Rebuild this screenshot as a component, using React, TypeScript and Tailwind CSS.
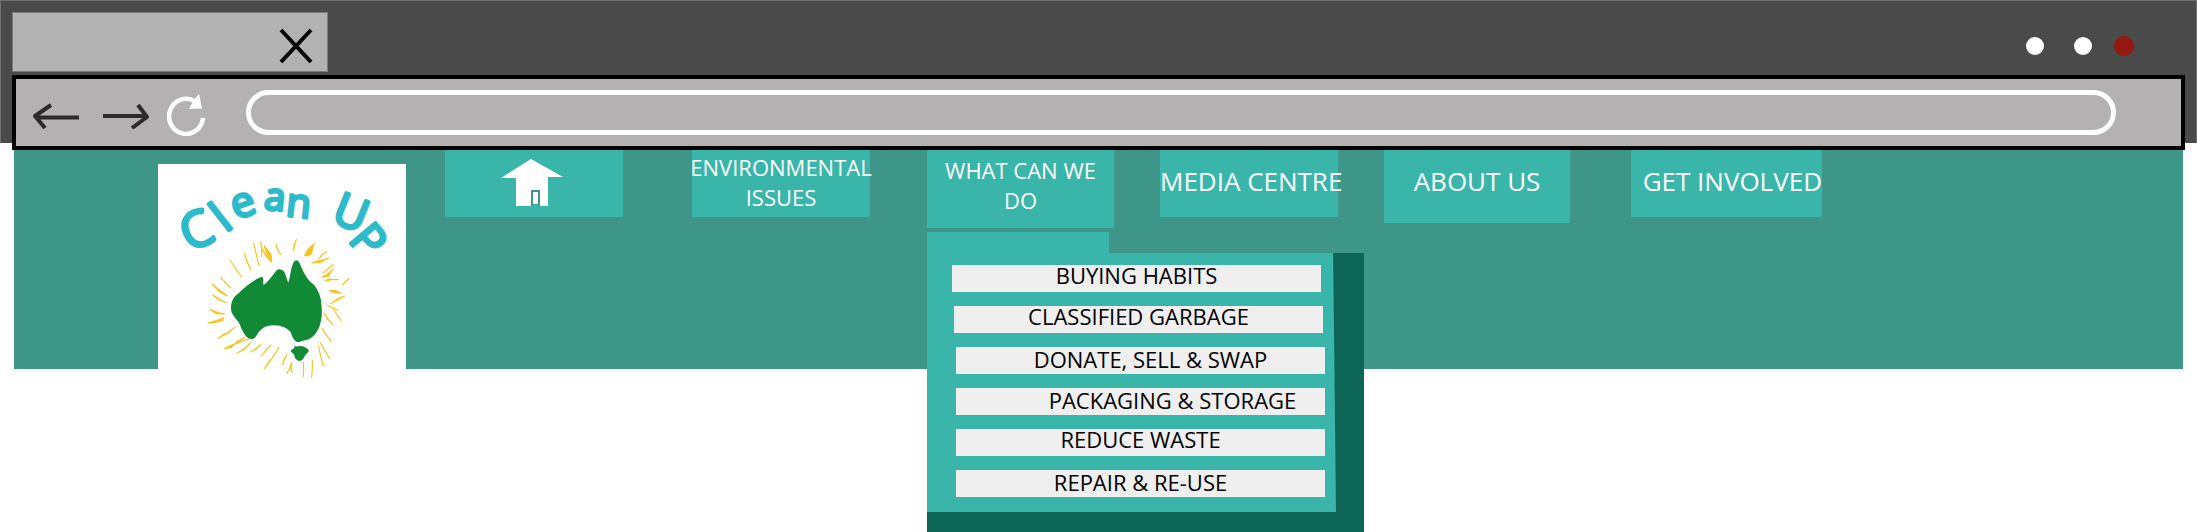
import React from "react";

const menuItems = [
  { label: "BUYING HABITS", place: "pb-2" },
  { label: "CLASSIFIED GARBAGE", place: "ml-0.5 pb-2" },
  { label: "DONATE, SELL & SWAP", place: "ml-1 pb-1 pl-5" },
  { label: "PACKAGING & STORAGE", place: "ml-1 pb-1 pl-16" },
  { label: "REDUCE WASTE", place: "ml-1 pb-2" },
  { label: "REPAIR & RE-USE", place: "ml-1 pb-1" },
];

const rays = [
  "M240 330l18 27 17 24", "M283 310l8 25 12 24", "M311 280l8 34 8 32", "M332 275l4 22-2 24",
  "M343 288l10 20 10 28", "M334 291l12 25 16 18", "M343 288l8 24 14 22-2-20z", "M378 282l5 18 9 14",
  "M439 269l-7 16-1 18", "M494 280l-20 18-10 18 10 2 12-8", "M529 305l-12 8-9 12",
  "M536 324l-24 13-26 2 22-8", "M550 344l-16 12-15 14", "M550 357l-18 16-16 9 22-5",
  "M565 389l-20 0-20 4 12-7", "M598 386l-12 9-9 10", "M538 422l16 6 18 2-16-9z",
  "M584 438l-22 12-20 11 24-16z", "M531 466l20 8 13 7", "M548 474l12 18 13 20",
  "M522 489l12 20 16 15", "M516 536l12 18 16 20", "M511 578l12 22 16 25", "M506 590l6 28 8 30",
  "M487 632l0 24-2 26", "M460 637l1 22-1 20", "M424 638l-4 12 7 18", "M426 642l-8 16-8 12",
  "M411 613l-9 16-4 16", "M387 592l-16 26-28 39 18-28", "M363 585l-15 16-14 17", "M333 583l-14 14-18 9",
  "M301 579l-18 18-22 13", "M298 566l-22 8-22 9", "M284 561l-22 17-38 17 20-3 20-20",
  "M256 530l-20 18-32 17 20-14", "M222 503l-20 8-28 8 18-1 27-7", "M224 492l-20-4-23-9 18 12z",
  "M228 458l-20-10-20-13 20 15z", "M231 438l-22-17-22-19 20 22z", "M242 413l-15-14-15-16",
];

function Logo() {
  return (
    <svg viewBox="24 42 744 642" className="block w-full" role="img" aria-label="Clean UP">
      <text
        fill="#2dbacb"
        stroke="#2dbacb"
        strokeWidth="9"
        strokeLinejoin="round"
        fontFamily="'Open Sans', sans-serif"
      >
        <tspan fontSize="150" x="118" y="307" rotate="-24">C</tspan>
        <tspan fontSize="134" x="227" y="250" rotate="-38">l</tspan>
        <tspan fontSize="126" x="258" y="210" rotate="-20">e</tspan>
        <tspan fontSize="114" x="340" y="177" rotate="6">a</tspan>
        <tspan fontSize="120" x="406" y="197" rotate="6">n</tspan>
        <tspan> </tspan>
        <tspan fontSize="136" x="540" y="213" rotate="22">U</tspan>
        <tspan fontSize="138" x="592" y="270" rotate="50">P</tspan>
      </text>
      <g fill="#f5c51f" stroke="#f5c51f" strokeWidth="3.5" strokeLinejoin="round" strokeLinecap="round">
        {rays.map((d) => (
          <path key={d} d={d} />
        ))}
      </g>
      <g fill="#118a36">
        <path d="M338 381 C342 388 338 398 341 405 C354 395 366 379 378 363 C386 354 396 358 403 366 C409 376 410 389 415 398 C421 380 422 355 429 341 C436 327 443 329 449 340 C456 357 469 388 490 403 C503 417 513 439 514 461 C517 486 516 508 508 530 C499 552 485 567 468 570 C458 571 449 579 439 575 C430 571 427 559 422 547 C413 534 394 527 374 526 C350 525 332 535 322 553 C315 566 306 570 296 565 C282 556 275 537 267 518 C257 506 244 492 243 478 C242 462 246 450 255 439 C272 424 290 406 306 396 C317 389 330 380 338 381Z" />
        <path d="M434 589 C445 590 455 585 463 590 C469 595 478 597 476 604 C473 611 467 612 464 619 C461 628 452 635 446 632 C439 630 433 624 433 615 C430 609 420 607 423 600 C428 599 431 597 434 589Z" />
      </g>
    </svg>
  );
}

function HomeIcon() {
  return (
    <svg viewBox="0 0 62 48" className="mt-[9px] ml-14 h-12 w-[62px]" aria-hidden="true">
      <path fill="#fff" d="M30 0 62 18H47V47H15V19H0Z" />
      <path fill="none" stroke="#3d9688" strokeWidth="2" d="M31 47V32H38V47" />
      <path fill="#39b5a9" d="M32 45h5v2h-5z" />
    </svg>
  );
}

const small = "text-[22px] leading-[30px]";
const large = "text-[26px] leading-[36px]";
const tile = "block bg-[#39b5a9] text-center whitespace-nowrap text-white";

export default function App() {
  return (
    <div className="min-h-screen bg-white font-['Open_Sans','Noto_Sans',sans-serif]">
      <header className="flex flex-col border border-b-0 border-[#707071] bg-[#4a4a4b] pt-[11px]">
        <div className="mb-[3px] flex items-start">
          <div className="ml-[11px] flex h-[60px] w-[316px] items-start justify-end border border-[#7b7b7b] bg-[#b2b2b2] pt-[15px] pr-3.5">
            <button aria-label="Close tab">
              <svg viewBox="0 0 34 36" className="h-9 w-[34px]" fill="none" stroke="#000" strokeWidth="4">
                <path d="M2 2 32 34M32 2 2 34" />
              </svg>
            </button>
          </div>
          <div className="mt-6 mr-[62px] ml-auto flex items-center">
            <button aria-label="Minimise" className="size-[18px] rounded-full bg-white" />
            <button aria-label="Maximise" className="ml-[30px] size-[18px] rounded-full bg-white" />
            <button aria-label="Close window" className="ml-[22px] size-5 rounded-full bg-[#941911]" />
          </div>
        </div>
        <div className="mr-[11px] -mb-[7px] ml-[11px] flex h-[75px] items-center border-4 border-black bg-[#b3b1b2] pl-4">
          <button aria-label="Back">
            <svg viewBox="0 0 48 26" className="mt-1.5 h-[26px] w-12" fill="none" stroke="#2b2b2b" strokeWidth="4">
              <path d="M47 14.500H4M19 2 3 13 13 25" strokeLinejoin="round" />
            </svg>
          </button>
          <button aria-label="Forward" className="ml-[22px]">
            <svg viewBox="0 0 48 26" className="mt-1.5 h-[26px] w-12" fill="none" stroke="#2b2b2b" strokeWidth="4">
              <path d="M1 13H44M36 2 45 14 30 25" strokeLinejoin="round" />
            </svg>
          </button>
          <button aria-label="Reload" className="ml-[17px]">
            <svg viewBox="0 0 40 42" className="mt-1 h-[42px] w-10">
              <path d="M28 7.500A17 17.500 0 1 0 36 24" fill="none" stroke="#fff" strokeWidth="4.500" />
              <path d="M32 0 35 14.500 22 15 27 6Z" fill="#fff" />
            </svg>
          </button>
          <input
            aria-label="Address"
            className="mr-[65px] ml-[39px] h-[45px] min-w-0 flex-1 rounded-full border-[5px] border-white bg-transparent px-5 text-xl outline-none"
          />
        </div>
      </header>

      <div className="mx-[14px] mt-[7px] flex min-h-[219px] items-start bg-[#3d9688]">
        <a href="#top" className="mt-[14px] -mb-2.5 ml-36 block w-[248px] shrink-0 bg-white">
          <Logo />
        </a>
        <nav aria-label="Main">
          <ul className="flex items-start">
            <li className="ml-[39px] w-[178px]">
              <a href="#home" aria-label="Home" className={`${tile} flex h-[67px]`}>
                <HomeIcon />
              </a>
            </li>
            <li className="ml-[69px] w-[178px]">
              <a href="#issues" className={`${tile} ${small} flex h-[67px] flex-col items-center pt-0.5`}>
                <span>ENVIRONMENTAL</span>
                <span>ISSUES</span>
              </a>
            </li>
            <li className="relative ml-[57px] w-[187px]">
              <a href="#actions" aria-expanded="true" className={`${tile} ${small} h-[78px] pt-[5px]`}>
                WHAT CAN WE
                <br />
                DO
              </a>
              <div className="absolute top-[82px] left-0 z-10">
                <div className="h-[21px] w-[182px] bg-[#39b5a9]" />
                <div className="w-[437px] bg-[#0d6655] pr-7 pb-[21px]">
                  <ul className="flex flex-col gap-3.5 bg-[#39b5a9] pt-3 pr-[16px] pb-[15px] pl-[25px] [clip-path:polygon(0_0,99.3%_0,100%_100%,0_100%)]">
                    {menuItems.map((item) => (
                      <li key={item.label}>
                        <a
                          href="#menu"
                          className={`flex h-[27px] w-[369px] items-center justify-center bg-[#efefef] whitespace-nowrap text-black ${small} ${item.place}`}
                        >
                          {item.label}
                        </a>
                      </li>
                    ))}
                  </ul>
                </div>
              </div>
            </li>
            <li className="ml-[46px] w-[178px]">
              <a href="#media" className={`${tile} ${large} flex h-[67px] pt-[13px]`}>
                MEDIA CENTRE
              </a>
            </li>
            <li className="ml-[46px] w-[186px]">
              <a href="#about" className={`${tile} ${large} h-[73px] pt-[13px]`}>
                ABOUT US
              </a>
            </li>
            <li className="ml-[61px] w-[191px]">
              <a href="#join" className={`${tile} ${large} flex h-[67px] justify-end pt-[13px]`}>
                GET INVOLVED
              </a>
            </li>
          </ul>
        </nav>
      </div>
    </div>
  );
}
